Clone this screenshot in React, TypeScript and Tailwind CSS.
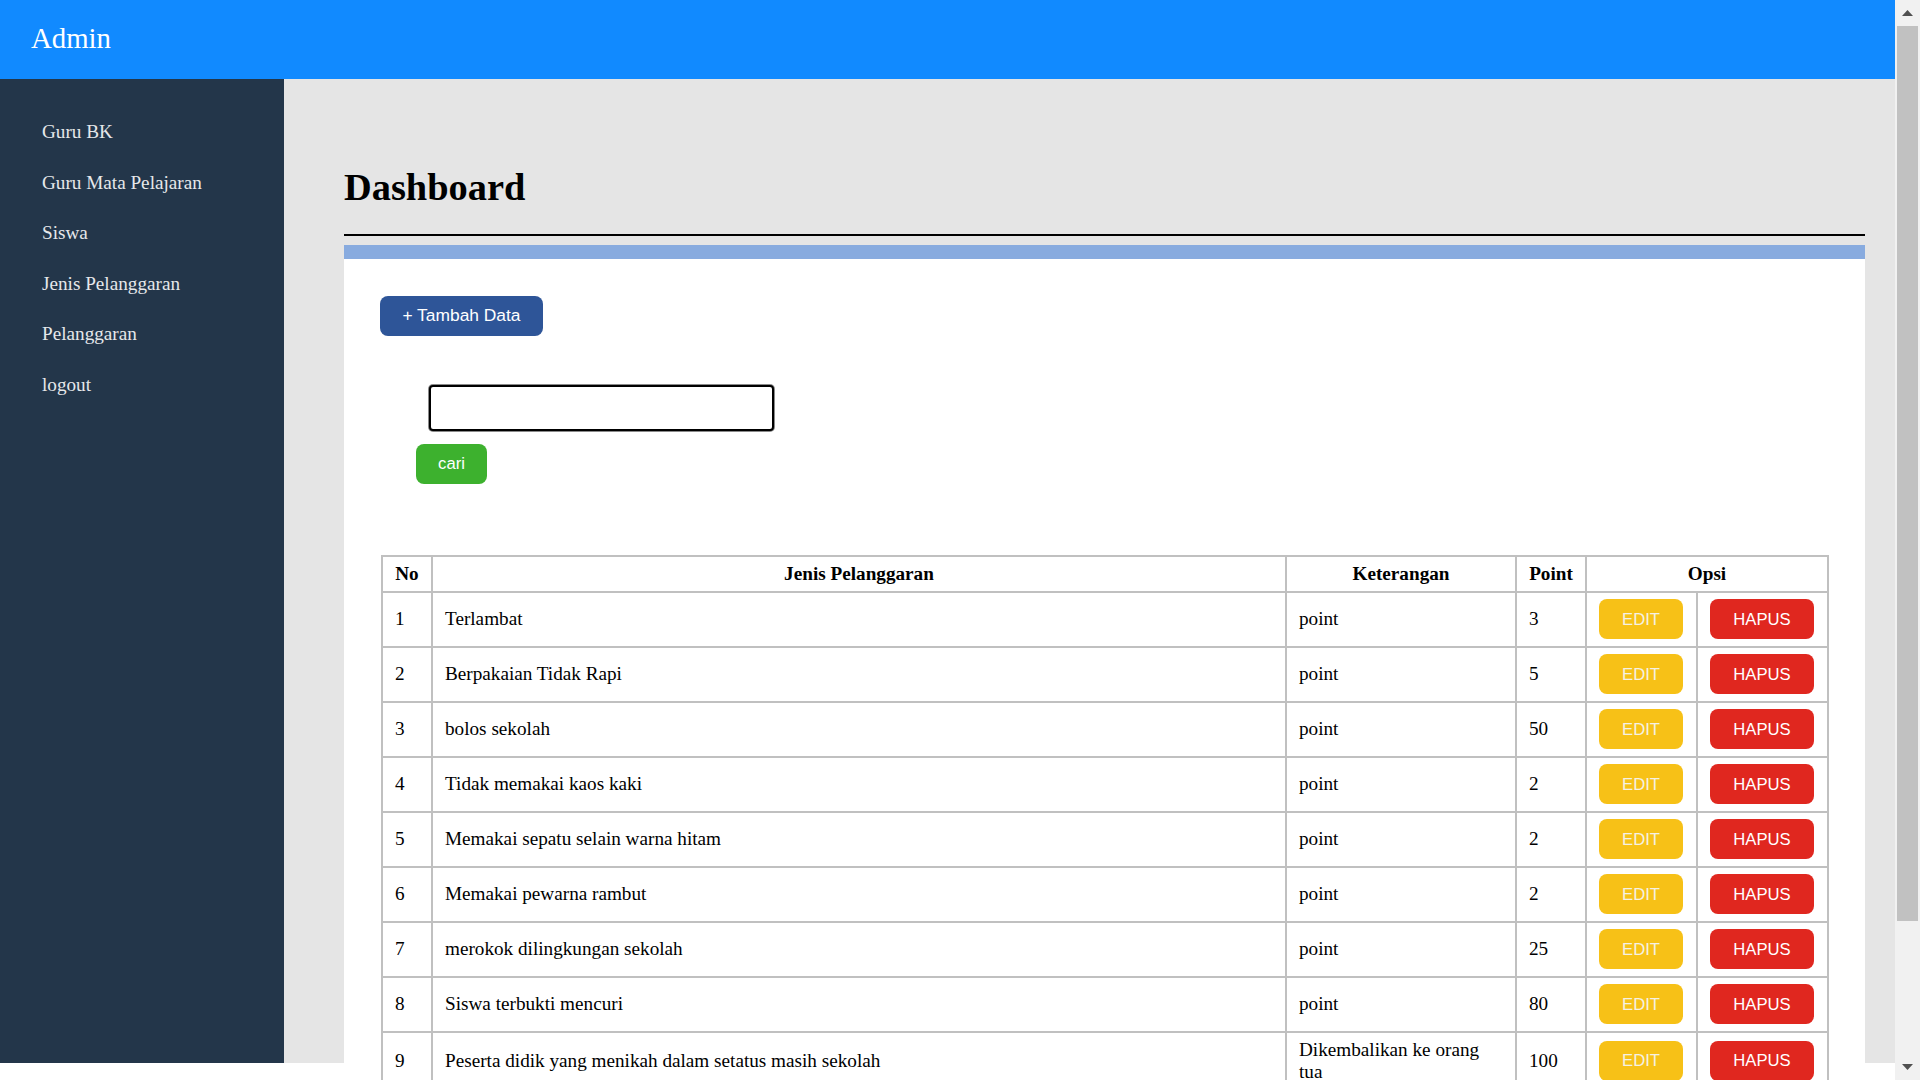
import React from "react";

const rows: { no: number; jenis: string; ket: string; point: number }[] = [
  { no: 1, jenis: "Terlambat", ket: "point", point: 3 },
  { no: 2, jenis: "Berpakaian Tidak Rapi", ket: "point", point: 5 },
  { no: 3, jenis: "bolos sekolah", ket: "point", point: 50 },
  { no: 4, jenis: "Tidak memakai kaos kaki", ket: "point", point: 2 },
  { no: 5, jenis: "Memakai sepatu selain warna hitam", ket: "point", point: 2 },
  { no: 6, jenis: "Memakai pewarna rambut", ket: "point", point: 2 },
  { no: 7, jenis: "merokok dilingkungan sekolah", ket: "point", point: 25 },
  { no: 8, jenis: "Siswa terbukti mencuri", ket: "point", point: 80 },
  { no: 9, jenis: "Peserta didik yang menikah dalam setatus masih sekolah", ket: "Dikembalikan ke orang tua", point: 100 },
];

const navItems = ["Guru BK", "Guru Mata Pelajaran", "Siswa", "Jenis Pelanggaran", "Pelanggaran", "logout"];

export default function App() {
  return (
    <div className="flex h-[1080px] w-[1920px] overflow-hidden bg-white font-['Liberation_Serif',serif] text-black">
      <div className="flex w-[1895px] shrink-0 flex-col">
        <header className="flex h-[79px] shrink-0 items-center bg-[#118aff] pb-[2px] pl-[31px] text-[28.8px] text-white">
          Admin
        </header>
        <div className="flex h-[984px] shrink-0">
          <aside className="w-[284px] shrink-0 bg-[#23364a] pt-[28.5px]">
            {navItems.map((n) => (
              <div key={n} className="flex h-[50.5px] items-center pl-[42px] text-[19.2px] text-[#e6e8ea]">
                {n}
              </div>
            ))}
          </aside>
          <main className="min-w-0 flex-1 bg-[#e5e5e5] pl-[60px] pr-[30px] pt-[85px]">
            <h1 className="text-[38.4px] font-bold leading-[46px]">Dashboard</h1>
            <div className="mt-[23.5px] h-[2px] bg-black" />
            <div className="mt-[9px] border-t-[14px] border-[#88abdf] bg-white pl-[36px] pr-[38px] pt-[37px]">
              <button className="h-[40px] w-[163px] rounded-[8px] bg-[#2e5598] font-['Liberation_Sans',sans-serif] text-[17.4px] text-white">
                + Tambah Data
              </button>
              <div className="mt-[49px] pl-[48.6px]">
                <input
                  type="text"
                  className="block h-[46px] w-[345px] rounded-[4px] border-2 border-black bg-white shadow-[0_0_0_1px_#8a8a8a] outline-none"
                />
              </div>
              <button className="mt-[13px] ml-[36px] h-[40px] w-[71px] rounded-[8px] bg-[#3db12e] font-['Liberation_Sans',sans-serif] text-[16.67px] text-white">
                cari
              </button>
              <table className="mt-[71px] ml-[1px] w-[1446px] table-fixed border-collapse border-2 border-[#c0c0c0] text-[19.2px]">
                <colgroup>
                  <col className="w-[50px]" />
                  <col className="w-[854px]" />
                  <col className="w-[230px]" />
                  <col className="w-[70px]" />
                  <col className="w-[111px]" />
                  <col className="w-[131px]" />
                </colgroup>
                <thead>
                  <tr className="h-[36px]">
                    <th className="border-2 border-[#c0c0c0] px-[6px] py-0 text-center font-bold leading-[22px]">No</th>
                    <th className="border-2 border-[#c0c0c0] px-[6px] py-0 text-center font-bold leading-[22px]">Jenis Pelanggaran</th>
                    <th className="border-2 border-[#c0c0c0] px-[6px] py-0 text-center font-bold leading-[22px]">Keterangan</th>
                    <th className="border-2 border-[#c0c0c0] px-[6px] py-0 text-center font-bold leading-[22px]">Point</th>
                    <th colSpan={2} className="border-2 border-[#c0c0c0] px-[6px] py-0 text-center font-bold leading-[22px]">
                      Opsi
                    </th>
                  </tr>
                </thead>
                <tbody>
                  {rows.map((r) => (
                    <tr key={r.no} className="h-[55px]">
                      <td className="border-2 border-[#c0c0c0] px-[12px] py-[6px] align-middle leading-[22px]">{r.no}</td>
                      <td className="border-2 border-[#c0c0c0] px-[12px] py-[6px] align-middle leading-[22px]">{r.jenis}</td>
                      <td className="border-2 border-[#c0c0c0] px-[12px] py-[6px] align-middle leading-[22px]">{r.ket}</td>
                      <td className="border-2 border-[#c0c0c0] px-[12px] py-[6px] align-middle leading-[22px]">{r.point}</td>
                      <td className="border-2 border-[#c0c0c0] px-[12px] py-[6px] align-middle">
                        <button className="block h-[40px] w-[84px] rounded-[8px] bg-[#f7c117] font-['Liberation_Sans',sans-serif] text-[16.67px] text-[#f5f1e4]">
                          EDIT
                        </button>
                      </td>
                      <td className="border-2 border-[#c0c0c0] px-[12px] py-[6px] align-middle">
                        <button className="block h-[40px] w-[104px] rounded-[8px] bg-[#e0271f] font-['Liberation_Sans',sans-serif] text-[16.67px] text-white">
                          HAPUS
                        </button>
                      </td>
                    </tr>
                  ))}
                </tbody>
              </table>
            </div>
          </main>
        </div>
      </div>
      <div className="flex w-[25px] shrink-0 flex-col bg-[#f1f1f1]">
        <div className="flex h-[26px] shrink-0 items-center justify-center">
          <svg width="11" height="6" viewBox="0 0 11 6">
            <polygon points="5.5,0 11,6 0,6" fill="#505050" />
          </svg>
        </div>
        <div className="mx-[2px] h-[895px] shrink-0 bg-[#c1c1c1]" />
        <div className="flex-1" />
        <div className="flex h-[26px] shrink-0 items-center justify-center">
          <svg width="11" height="6" viewBox="0 0 11 6">
            <polygon points="0,0 11,0 5.5,6" fill="#505050" />
          </svg>
        </div>
      </div>
    </div>
  );
}
